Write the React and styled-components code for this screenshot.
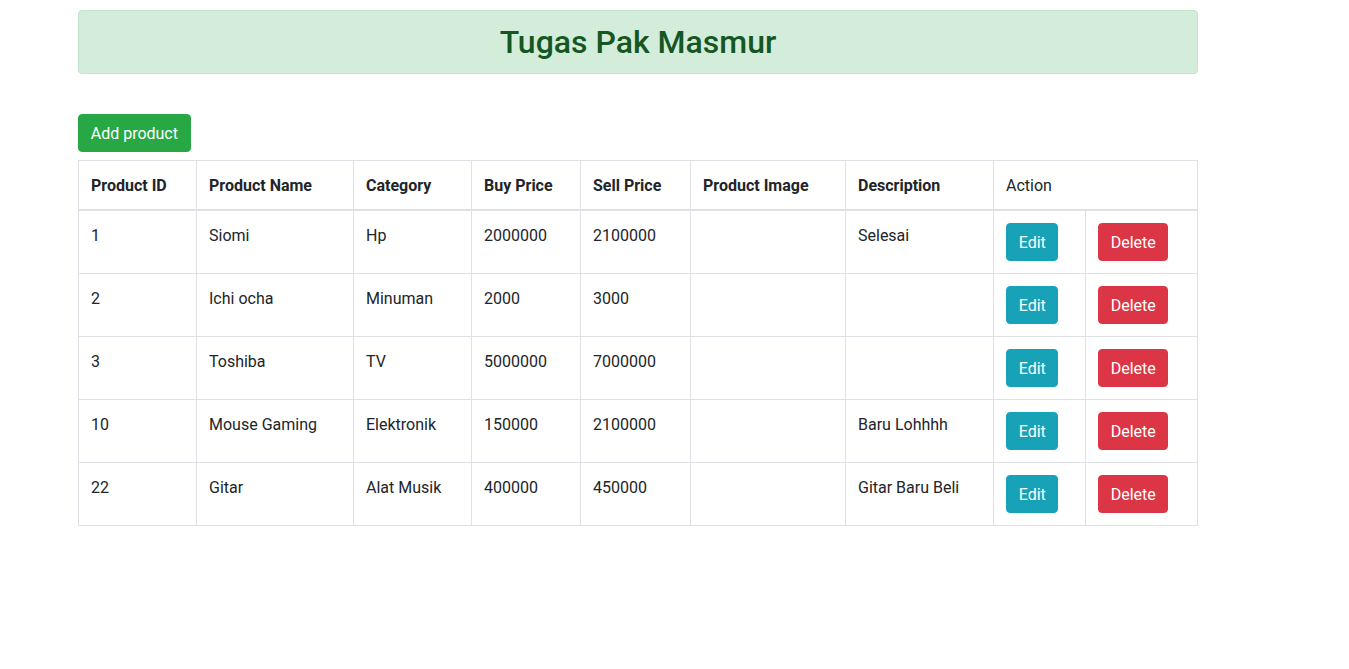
import React from 'react'
import styled, { createGlobalStyle } from 'styled-components'

const GlobalStyle = createGlobalStyle`
    body {
        margin: 0;
        font-family: Roboto, "Helvetica Neue", Arial, sans-serif;
        font-size: 16px;
        line-height: 1.5;
        color: #212529;
        background: #fff;
    }
    * { box-sizing: border-box; }
`

const Container = styled.div`
    width: 1120px;
    margin-left: 78px;
    padding-top: 10px;
`

const Alert = styled.div`
    background: #d4edda;
    border: 1px solid #c3e6cb;
    border-radius: 4px;
    padding: 13px 20px 12px;
    text-align: center;
`

const Title = styled.h2`
    margin: 0;
    color: #155724;
    font-size: 32px;
    font-weight: 500;
    line-height: 37px;
`

const Toolbar = styled.div`
    margin-top: 40px;
    margin-bottom: 8px;
`

const Button = styled.button`
    font-family: inherit;
    font-size: 16px;
    line-height: 24px;
    padding: 7px 11.7px 5px;
    border: 1px solid ${p => p.$bg};
    border-radius: 4px;
    background: ${p => p.$bg};
    color: #fff;
    cursor: pointer;
`

const Table = styled.table`
    width: 1119px;
    table-layout: fixed;
    border-collapse: collapse;
    color: #212529;
`

const Th = styled.th`
    padding: 13px 12px 11px;
    text-align: left;
    vertical-align: bottom;
    border: 1px solid #dee2e6;
    border-bottom: 2px solid #dee2e6;
    font-weight: ${p => (p.$plain ? 400 : 700)};
    line-height: 24px;
`

const Td = styled.td`
    padding: 13px 12px 11px;
    vertical-align: top;
    border: 1px solid #dee2e6;
    line-height: 24px;
`

const ActionTd = styled(Td)`
    padding: 12px;
`

const widths = [118, 157, 118, 109, 110, 155, 148, 92, 112]

const products = [
    { id: 1, name: 'Siomi', category: 'Hp', buy: 2000000, sell: 2100000, desc: 'Selesai' },
    { id: 2, name: 'Ichi ocha', category: 'Minuman', buy: 2000, sell: 3000, desc: '' },
    { id: 3, name: 'Toshiba', category: 'TV', buy: 5000000, sell: 7000000, desc: '' },
    { id: 10, name: 'Mouse Gaming', category: 'Elektronik', buy: 150000, sell: 2100000, desc: 'Baru Lohhhh' },
    { id: 22, name: 'Gitar', category: 'Alat Musik', buy: 400000, sell: 450000, desc: 'Gitar Baru Beli' },
]

const App = () => {
    return (
        <>
            <GlobalStyle />
            <Container>
                <Alert>
                    <Title>Tugas Pak Masmur</Title>
                </Alert>

                <Toolbar>
                    <Button $bg='#28a745'>Add product</Button>
                </Toolbar>

                <Table>
                    <colgroup>
                        {widths.map((w, i) => <col key={i} style={{ width: w }} />)}
                    </colgroup>
                    <thead>
                        <tr>
                            <Th>Product ID</Th>
                            <Th>Product Name</Th>
                            <Th>Category</Th>
                            <Th>Buy Price</Th>
                            <Th>Sell Price</Th>
                            <Th>Product Image</Th>
                            <Th>Description</Th>
                            <Th $plain colSpan={2}>Action</Th>
                        </tr>
                    </thead>
                    <tbody>
                        {products.map(p => (
                            <tr key={p.id}>
                                <Td>{p.id}</Td>
                                <Td>{p.name}</Td>
                                <Td>{p.category}</Td>
                                <Td>{p.buy}</Td>
                                <Td>{p.sell}</Td>
                                <Td></Td>
                                <Td>{p.desc}</Td>
                                <ActionTd><Button $bg='#17a2b8'>Edit</Button></ActionTd>
                                <ActionTd><Button $bg='#dc3545'>Delete</Button></ActionTd>
                            </tr>
                        ))}
                    </tbody>
                </Table>
            </Container>
        </>
    )
}

export default App
